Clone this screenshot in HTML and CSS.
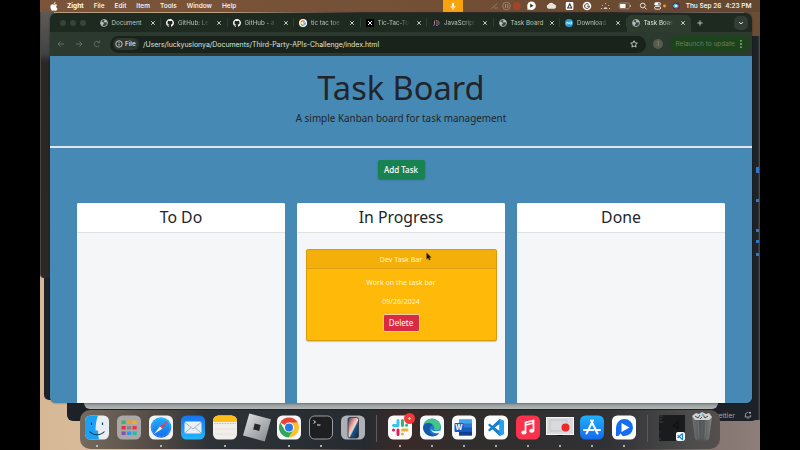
FILE: index.html
```html
<!DOCTYPE html>
<html lang="en">
<head>
<meta charset="utf-8">
<title>Task Board</title>
<link rel="stylesheet" href="styles.css">
</head>
<body>
<svg width="0" height="0" class="defs" aria-hidden="true">
  <defs>
    <symbol id="globe" viewBox="0 0 16 16"><circle cx="8" cy="8" r="7" fill="#39443d" stroke="#b9c1bd" stroke-width="1.6"/><path d="M2 5l4 1 2 3-2 2-1 3C2 12 1 9 2 5zM8 1l1 3-2 2 3 1 3-1 1 3 1-1C15 4 12 1 8 1z" fill="#b9c1bd"/></symbol>
    <symbol id="github" viewBox="0 0 16 16"><path fill="#fff" d="M8 0C3.58 0 0 3.58 0 8c0 3.54 2.29 6.53 5.47 7.59.4.07.55-.17.55-.38 0-.19-.01-.82-.01-1.49-2.01.37-2.53-.49-2.69-.94-.09-.23-.48-.94-.82-1.13-.28-.15-.68-.52-.01-.53.63-.01 1.08.58 1.23.82.72 1.21 1.87.87 2.33.66.07-.52.28-.87.51-1.07-1.78-.2-3.64-.89-3.64-3.95 0-.87.31-1.59.82-2.15-.08-.2-.36-1.02.08-2.12 0 0 .67-.21 2.2.82a7.42 7.42 0 0 1 4 0c1.53-1.04 2.2-.82 2.2-.82.44 1.1.16 1.92.08 2.12.51.56.82 1.27.82 2.15 0 3.07-1.87 3.75-3.65 3.95.29.25.54.73.54 1.48 0 1.07-.01 1.93-.01 2.2 0 .21.15.46.55.38A8.01 8.01 0 0 0 16 8c0-4.42-3.58-8-8-8z"/></symbol>
    <symbol id="close" viewBox="0 0 6 6"><path d="M1.2 1.2l3.6 3.6M4.8 1.2L1.2 4.8" stroke="#d5dcd7" stroke-width=".9"/></symbol>
    <linearGradient id="blue" x2="0" y2="1"><stop stop-color="#1fb1fb"/><stop offset="1" stop-color="#1669ec"/></linearGradient>
    <linearGradient id="mail" x2="0" y2="1"><stop stop-color="#1673ee"/><stop offset="1" stop-color="#22b6fb"/></linearGradient>
    <linearGradient id="silver" x2="1" y2="1"><stop stop-color="#e4e6e8"/><stop offset="1" stop-color="#818589"/></linearGradient>
    <linearGradient id="phone" x2="1" y2="1"><stop stop-color="#173c6d"/><stop offset=".35" stop-color="#ef9b91"/><stop offset=".52" stop-color="#e5ddd9"/><stop offset=".6" stop-color="#16558c"/><stop offset="1" stop-color="#0c2544"/></linearGradient>
    <linearGradient id="bin" x2="1"><stop stop-color="#777a7a"/><stop offset=".5" stop-color="#4c5050"/><stop offset="1" stop-color="#8b8e8e"/></linearGradient>
  </defs>
</svg>
<main class="desktop">
  <div class="back-window back-left"></div>
  <div class="back-window back-left-low"></div>
  <div class="back-window back-right"></div>
  <div class="back-window editor"><span>Prettier</span>
    <svg width="8" height="8" viewBox="0 0 8 8"><path d="M1.4 6V4a2.6 2.6 0 0 1 3-2.6M6.6 4v2H.8M3.2 7.2h1.6" fill="none" stroke="#b0b2b5" stroke-width=".8"/><circle cx="6" cy="1.8" r="1" fill="#b0b2b5"/></svg></div>
  <div class="back-window light"></div>
  <i class="mark m1"></i><i class="mark m2"></i><i class="mark m3"></i><i class="mark m4"></i><i class="mark m5"></i>

  <header class="menubar">
    <svg class="apple" width="8" height="9" viewBox="0 0 16 18"><path fill="#fff" d="M11 0c.2 2-1.500 4-3.400 4C7.400 2 9.200.2 11 0zM14.300 6.200C13 7 12.500 8 12.500 9.300c0 1.700 1 2.900 2.500 3.500-.8 2.400-2.400 4.700-4 4.700-1.100 0-1.500-.7-2.900-.7s-1.900.7-2.900.7C3 17.500.8 13.500.8 9.900.8 6.500 2.900 4.700 5 4.700c1.300 0 2.300.8 3.200.8.800 0 2-.9 3.500-.9 1 0 2 .5 2.600 1.600z"/></svg>
    <b>Zight</b><span>File</span><span>Edit</span><span>Item</span><span>Tools</span><span>Window</span><span>Help</span>
    <div class="mic"><svg width="6" height="9" viewBox="0 0 6 9"><rect x="1.900" y=".7" width="2.200" height="4.300" rx="1.100" fill="#fff"/><path d="M.9 4a2.100 2.100 0 0 0 4.200 0M3 6.200V8" fill="none" stroke="#fff" stroke-width=".8"/></svg></div>
    <svg class="status" width="192" height="12" viewBox="490 0 192 12">
      <path d="M491.500 8.500l6-5.200M494 8h4" stroke="#907b69" fill="none"/>
      <circle cx="506.500" cy="6" r="3.800" stroke="#a28e7d" fill="none" stroke-width=".8"/><path d="M505.500 4v4M507.700 4v4" stroke="#a28e7d"/>
      <circle cx="516.700" cy="6" r="3.900" fill="#a2442c"/>
      <circle cx="531.500" cy="5.800" r="4.300" fill="#fff"/><path d="M527.500 7v3l3-1" fill="#fff"/><path d="M530.200 3.600v4.200l3.400-2.100z" fill="#4c3a2b"/>
      <path d="M548.500 8.800a2.200 2.200 0 0 1-.2-4.200 3.200 3.200 0 0 1 5.700-.3 2.300 2.300 0 0 1 .5 4.500z" fill="#e9e3dd"/>
      <rect x="565.800" y="2" width="7.600" height="8" rx="1" fill="#fff"/><path d="M567.700 8l2-4.200 2 4.200z" fill="none" stroke="#43352a" stroke-width="1.100"/>
      <circle cx="587" cy="6" r="4.300" fill="#f8f5f2"/><path d="M588.700 4.400a2.400 2.400 0 1 0 .7 1.800H587" fill="none" stroke="#4c3a2b"/>
      <path d="M601 8.500h1M602 5l.8.700M605.500 3.200v1M609 5l-.8.700M609 8.500h1M604 8.500a1.600 1.600 0 0 1 3 0z" stroke="#e4d9ce" fill="none" stroke-width=".9"/>
      <rect x="619.300" y="3" width="10" height="5.800" rx="1.500" stroke="#a99687" fill="none" stroke-width=".8"/><rect x="620.100" y="3.900" width="5.500" height="4" rx=".6" fill="#fff"/><path d="M630.400 5v2" stroke="#b8a799"/>
      <circle cx="642.800" cy="5.500" r="2.400" stroke="#eee5dd" fill="none"/><path d="M644.600 7.400l2 2" stroke="#eee5dd"/>
      <rect x="654.300" y="2.300" width="6.500" height="3.200" rx="1.600" fill="#fff"/><circle cx="659" cy="3.900" r=".9" fill="#654831"/><rect x="654.600" y="6.500" width="6" height="2.700" rx="1.300" fill="none" stroke="#fff" stroke-width=".8"/><circle cx="664.500" cy="6" r="1.400" fill="#ff9b22"/>
      <circle cx="676.200" cy="6" r="3.500" fill="#413554"/><path d="M673 6c2-4 4-2 6 0-2 1-4 4-6 0z" fill="#52cbe8"/><path d="M674 7.500c2 2 4 1 5-1z" fill="#d15276"/><circle cx="676" cy="6" r="1.200" fill="#fff"/>
    </svg>
    <span class="date">Thu Sep 26</span><span class="time">4:23 PM</span>
  </header>

  <section class="browser">
    <div class="tabs">
      <div class="lights"><i></i><i></i><i></i></div>
      <div class="tab"><svg><use href="#globe"/></svg><span>Document</span><svg class="x"><use href="#close"/></svg></div>
      <div class="tab"><svg><use href="#github"/></svg><span class="fade">GitHub: Le</span><svg class="x"><use href="#close"/></svg></div>
      <div class="tab"><svg><use href="#github"/></svg><span class="fade">GitHub - a</span><svg class="x"><use href="#close"/></svg></div>
      <div class="tab"><svg viewBox="0 0 16 16"><circle cx="8" cy="8" r="8" fill="#fff"/><g fill="none" stroke-width="2.300"><path d="M4.200 5.500A4.500 4.500 0 0 1 11.300 5" stroke="#ea4335"/><path d="M4.200 5.500a4.500 4.500 0 0 0 0 5" stroke="#fbbc05"/><path d="M4.200 10.500a4.500 4.500 0 0 0 7 .8" stroke="#34a853"/><path d="M11.200 11.300A4.500 4.500 0 0 0 12.500 8H8" stroke="#4285f4"/></g></svg><span class="fade">tic tac toe</span><svg class="x"><use href="#close"/></svg></div>
      <div class="tab"><svg viewBox="0 0 16 16"><rect width="16" height="16" rx="2" fill="#000"/><path d="M4 4l8 8M12 4l-8 8" stroke="#fff" stroke-width="2"/></svg><span class="fade">Tic-Tac-To</span><svg class="x"><use href="#close"/></svg></div>
      <div class="tab"><svg viewBox="0 0 16 16"><rect width="16" height="16" fill="#17233d"/><path d="M5 3v8c0 2-2 2-3 1" fill="none" stroke="#d1844d" stroke-width="1.800"/><path d="M8 2c3 1 3 11 0 12M11 3c4 1 4 9 0 10" fill="none" stroke="#9c806f" stroke-width="1.800"/></svg><span class="fade">JavaScript</span><svg class="x"><use href="#close"/></svg></div>
      <div class="tab"><svg><use href="#globe"/></svg><span>Task Board</span><svg class="x"><use href="#close"/></svg></div>
      <div class="tab"><svg viewBox="0 0 16 16"><circle cx="8" cy="8" r="8" fill="#2a9bd7"/><path d="M4 11V6l4 4V6M10 5v4c0 2 3 2 3 0V5" fill="none" stroke="#e6faff" stroke-width="1.600"/></svg><span class="fade">Download</span><svg class="x"><use href="#close"/></svg></div>
      <div class="tab active"><svg><use href="#globe"/></svg><span class="fade">Task Board</span><svg class="x"><use href="#close"/></svg></div>
      <svg class="plus" width="6" height="6" viewBox="0 0 6 6"><path d="M3 .3v5.400M.3 3h5.400" stroke="#c1cac3" stroke-width=".9"/></svg>
      <div class="chevron"><svg width="6" height="4" viewBox="0 0 6 4"><path d="M1 1l2 2 2-2" fill="none" stroke="#dce3dd"/></svg></div>
    </div>
    <div class="toolbar">
      <svg class="nav" width="46" height="10" viewBox="0 0 46 10"><g fill="none" stroke="#667269" stroke-width=".9"><path d="M8 5H2M4.700 2.300L2 5l2.700 2.700M20 5h6M23.300 2.300L26 5l-2.700 2.700M43.300 6.300a2.700 2.700 0 1 1-.5-3.200"/><path d="M43.700 1.500v2.200h-2.200"/></g></svg>
      <div class="address">
        <div class="file"><svg width="8" height="8" viewBox="0 0 8 8"><circle cx="4" cy="4" r="3.200" fill="none" stroke="#e5ebe7" stroke-width=".8"/><path d="M4 3.500v2.200M4 2v.8" stroke="#e5ebe7" stroke-width=".8"/></svg><span>File</span></div>
        <span class="url">/Users/luckyusionya/Documents/Third-Party-APIs-Challenge/index.html</span>
        <svg class="star" width="8" height="8" viewBox="0 0 16 16"><path d="M8 1.500l2 4.300 4.700.5-3.500 3.200 1 4.700L8 11.800l-4.200 2.400 1-4.700L1.300 6.300 6 5.800z" fill="none" stroke="#d5ddd7" stroke-width="1.700"/></svg>
      </div>
      <div class="profile">I</div>
      <div class="relaunch"><span>Relaunch to update</span><svg width="2" height="8" viewBox="0 0 2 8"><path d="M.3 .2h1.400v1.400H.3zM.3 3.300h1.400v1.400H.3zM.3 6.400h1.400v1.400H.3z" fill="#b7d9b3"/></svg></div>
    </div>
    <div class="page">
      <div class="hero"><h1>Task Board</h1><p>A simple Kanban board for task management</p></div>
      <div class="actions"><button class="add">Add Task</button></div>
      <div class="lanes">
        <section class="lane"><h2>To Do</h2></section>
        <section class="lane"><h2>In Progress</h2>
          <article class="task"><h3>Dev Task Bar</h3><div class="task-body"><p>Work on the task bar</p><p>09/26/2024</p><button class="delete">Delete</button></div></article>
        </section>
        <section class="lane"><h2>Done</h2></section>
      </div>
    </div>
  </section>
  <svg class="cursor" width="6" height="9" viewBox="0 0 6 9"><path d="M.6.8v6.400l1.500-1.300 1 2.300 1.200-.6-1-2.200h2z" fill="#111" stroke="#77601e" stroke-width=".4"/></svg>

  <nav class="dock">
    <div class="app on"><svg viewBox="0 0 24 24"><rect width="24" height="24" rx="5.500" fill="#e9eef5"/><path d="M13 0H5.500A5.500 5.500 0 0 0 0 5.500v13A5.500 5.500 0 0 0 5.500 24H14c-.8-3-1-6-1-9h-2.500C10.500 9 11.500 4 13 0z" fill="#1aa1f6"/><path d="M4.500 16c4 4.300 11 4.300 15 0" fill="none" stroke="#173653" stroke-width="1.100"/><path d="M6.500 7v2.500M17.500 7v2.500" stroke="#173653" stroke-width="1.200"/></svg></div>
    <div class="app"><svg viewBox="0 0 24 24"><rect width="24" height="24" rx="5.500" fill="#aaa8a7"/><path d="M4.500 5h4.200v3.500H4.500z" fill="#41b553"/><path d="M10 5h4.200v3.500H10z" fill="#f49c23"/><path d="M15.500 5h4.200v3.500h-4.200z" fill="#f1ae22"/><path d="M4.500 10.500h4.200V14H4.500z" fill="#e43244"/><path d="M10 10.500h4.200V14H10z" fill="#838487"/><path d="M15.500 10.500h4.200V14h-4.200z" fill="#e9324b"/><path d="M4.500 16h4.200v3.500H4.500z" fill="#8a4fb0"/><path d="M10 16h4.200v3.500H10z" fill="#2798e8"/><path d="M15.500 16h4.200v3.500h-4.200z" fill="#34b5a6"/></svg></div>
    <div class="app on"><svg viewBox="0 0 24 24"><rect width="24" height="24" rx="5.500" fill="#f1f3f5"/><circle cx="12" cy="12" r="10.300" fill="url(#blue)"/><circle cx="12" cy="12" r="9" stroke="#84c9f8" stroke-width="1" stroke-dasharray=".4 1" fill="none"/><path d="M19 5.500l-5.800 7.800-2.300-2.400z" fill="#ef3f3a"/><path d="M5 18.500l5.900-7.600 2.300 2.400z" fill="#f5f5f5"/></svg></div>
    <div class="app"><svg viewBox="0 0 24 24"><rect width="24" height="24" rx="5.500" fill="url(#mail)"/><rect x="3.500" y="6" width="17" height="12" rx="1.500" fill="#e9eff3"/><path d="M4 7l8 6.500L20 7M4 17.500l6-5.500M20 17.500L14 12" fill="none" stroke="#9ba9b5" stroke-width=".9"/></svg></div>
    <div class="app on"><svg viewBox="0 0 24 24"><rect width="24" height="24" rx="5.500" fill="#f2efeb"/><path d="M0 6.500V5.500A5.500 5.500 0 0 1 5.500 0h13A5.500 5.500 0 0 1 24 5.500v1z" fill="#ffbd16"/><path d="M1 8h22" stroke="#a8a39c" stroke-width=".8" stroke-dasharray=".8 .8"/><path d="M2 13.500h20M2 18.500h20" stroke="#d5d0ca" stroke-width=".5"/></svg></div>
    <div class="app"><svg class="roblox" viewBox="0 0 28 28"><path d="M6.300 0L28 5.800 21.800 28 0 22z" fill="url(#silver)"/><path d="M11.700 10l6 1.500-1.500 6-6-1.600z" fill="#272929"/></svg></div>
    <div class="app on"><svg viewBox="0 0 24 24"><rect width="24" height="24" rx="5.500" fill="#f8f8f8"/><path d="M12 12L3.300 7A10 10 0 0 1 20.700 7z" fill="#df4637"/><path d="M12 12h9.300A10 10 0 0 0 20.700 7H12zM12 12l4.300 2.500L11.500 22A10 10 0 0 0 21.500 9z" fill="#fbc329"/><path d="M12 12l-4.300 2.500L3.300 7A10 10 0 0 0 11.500 22l4.800-7.500z" fill="#32a657"/><circle cx="12" cy="12" r="5" fill="#fff"/><circle cx="12" cy="12" r="4" fill="#2877ec"/></svg></div>
    <div class="app on"><svg viewBox="0 0 24 24"><rect x=".5" y=".5" width="23" height="23" rx="5" fill="#1d1f20" stroke="#9c9d9e"/><path d="M4.500 5l2 1.500-2 1.500M8 9.500h3.500" fill="none" stroke="#e4e4e4" stroke-width="1"/></svg></div>
    <div class="app"><svg viewBox="0 0 24 24"><rect width="24" height="24" rx="5.500" fill="#adb1b5"/><rect x="7" y="2" width="10.500" height="20.500" rx="2" fill="url(#phone)" stroke="#2c3039" stroke-width=".8"/></svg></div>
    <i class="divider"></i>
    <div class="app on"><svg viewBox="0 0 24 24"><rect width="24" height="24" rx="5.500" fill="#fafafa"/><g fill="none" stroke-width="3" stroke-linecap="round"><path d="M10 5v5M5.500 10H10" stroke="#36c5f0"/><path d="M14.500 5v5M18.500 9.800h.1" stroke="#2eb67d"/><path d="M14.500 14.500h4.500M14.500 18.500v.1" stroke="#ecb22e"/><path d="M10 14.500V19M5.500 14.500h.1" stroke="#e01e5a"/></g></svg><b class="badge"></b></div>
    <div class="app on"><svg viewBox="0 0 24 24"><rect width="24" height="24" rx="5.500" fill="#f9fbfc"/><circle cx="12" cy="12" r="9" fill="#1685ce"/><path d="M4 8c3-7 14-6 16.500 1.500 1 5-4 6-6.500 5 2-4-2-8-10-6.500z" fill="#44c38b"/><path d="M3 12c1-5 8-6 10-2-3 0-4 3-3 6s5 4 9 2c-4 5-15 3-16-6z" fill="#175ba4"/><path d="M11 12c-.5 3 4 5 8.500 3l1 1.500c-5 3-10 0-9.500-4.500z" fill="#f9fbfc"/></svg></div>
    <div class="app on"><svg viewBox="0 0 24 24"><rect width="24" height="24" rx="5.500" fill="#f7f9fc"/><rect x="7" y="4" width="13" height="16" rx="1" fill="#2b7cd3"/><path d="M7 4h13v4H7z" fill="#41a5ee"/><path d="M7 12h13v4H7z" fill="#185abd"/><path d="M7 16h13v4H7z" fill="#103f91"/><rect x="2.500" y="7.500" width="9" height="9" rx="1" fill="#185abd"/><text x="7" y="14.400" text-anchor="middle" fill="#fff" font-size="7" font-weight="bold" font-family="Inter, sans-serif">W</text></svg></div>
    <div class="app on"><svg viewBox="0 0 24 24"><rect width="24" height="24" rx="5.500" fill="#fff"/><path d="M15.500 3.500L20 5.500v13l-4.500 2L4 9.500 5.500 8l10 7.500v-7l-10 7.500L4 14.500z" fill="#1681ca"/><path d="M15.500 3.500L20 5.500v13l-4.500 2z" fill="#25a1ed"/></svg></div>
    <div class="app on"><svg viewBox="0 0 24 24"><rect width="24" height="24" rx="5.500" fill="#fa334c"/><path d="M9.500 17V7l8-2v10M9.500 9.500l8-2" fill="none" stroke="#fff" stroke-width="1.700"/><ellipse cx="7.800" cy="17" rx="2.600" ry="2" fill="#fff"/><ellipse cx="15.800" cy="15.200" rx="2.600" ry="2" fill="#fff"/></svg></div>
    <div class="app on"><svg class="recorder" viewBox="0 0 28 24"><rect x=".5" y="2.500" width="27" height="17" fill="#d9dadd" stroke="#f4f4f4"/><path d="M4 5h17v11H4z" fill="none" stroke="#b3b6ba" stroke-width=".6"/><circle cx="19.500" cy="12.500" r="4" fill="#ef2828"/><path d="M11 20h6v1h-6z" fill="#111"/></svg></div>
    <div class="app on"><svg viewBox="0 0 24 24"><rect width="24" height="24" rx="5.500" fill="url(#blue)"/><path d="M11 5l6.500 13M13 5L6.500 18M4 14.500h9.500M16.500 14.500H20" stroke="#fff" stroke-width="2" stroke-linecap="round"/></svg></div>
    <div class="app on"><svg viewBox="0 0 24 24"><rect width="24" height="24" rx="5.500" fill="#fff"/><path d="M4 20.500V12a8.500 8.500 0 1 1 8.500 8.500z" fill="#176df1"/><path d="M6 21l2.500-3 2.500 3z" fill="#fff"/><path d="M9.500 7.500v9l8-4.500z" fill="#fff"/></svg></div>
    <i class="divider"></i>
    <div class="app code"><svg viewBox="0 0 28 26"><path d="M2 0h26v26H2z" fill="#1a1b1c"/><path d="M2 1h4M2 4h3M2 7h4M1 17h2M1 24h3" stroke="#3b4147"/><path d="M21 6v8l-5-4.500M21 6l-5 5.500" fill="none" stroke="#101112" stroke-width="1.200"/><rect x="19" y="17" width="9" height="9" rx="2" fill="#f8fbfe"/><path d="M25.500 18.500v6l-5-4.300M25.500 18.500L20.500 23" fill="none" stroke="#1685d1" stroke-width="1.200"/></svg></div>
    <div class="app trash"><svg viewBox="0 0 22 29"><path d="M1 5l3 22c2 2 12 2 14 0l3-22z" fill="url(#bin)" opacity=".85"/><path d="M1 4l4-3 3 1 3-2 4 2 3-1 3 4-3 3H4z" fill="#d2d3d2"/><path d="M4 4l3 2 2-3M12 3l2 3 3-2M9 7l2-2" stroke="#39474e" fill="none"/><path d="M11 2l2 2" stroke="#4fadd0" stroke-width="1.500"/><path d="M7 9l1 17M11 9v18M15 9l-1 17" stroke="#a0a3a3" stroke-width=".3"/></svg></div>
  </nav>
</main>
</body>
</html>
```
FILE: styles.css
```css
* { box-sizing: border-box; }
body { margin: 0; background: #000; font-family: Inter, sans-serif; overflow: hidden; }
h1, h2, h3, p { margin: 0; font-weight: 400; }
.defs { position: absolute; }
.desktop { position: relative; width: 720px; height: 450px; margin-left: 40px; overflow: hidden;
  background: linear-gradient(90deg, #d6b896, #ddc2a2 25%, #3c302e 45%, #3b3332 80%, #867571 93%, #8d7e79); }

.back-window { position: absolute; background: #1c2227; }
.back-left { left: 0; top: 12px; width: 14px; height: 266px; background: linear-gradient(#605a55, #3f4345 42px, #292626 50px, #2b2928); border-left: 1px solid #4b4542; border-radius: 0 0 0 4px; }
.back-left-low { left: 4px; top: 278px; width: 14px; height: 122px; border-radius: 0 0 0 5px; }
.back-right { right: 0; top: 12px; width: 16px; height: 408px; background: linear-gradient(90deg, #1c2227 85%, #505252); border-top: 24px solid #6b4d34; }
.editor { left: 27px; top: 385px; width: 691px; height: 36px; border-radius: 0 0 6px 6px; display: flex; align-items: flex-end; justify-content: flex-end; gap: 9px; padding: 0 6px 1px 0; color: #a1a4a7; font-size: 6.800px; line-height: 9px; }
.editor svg { margin-bottom: 1px; }
.light { left: 44px; top: 390px; width: 634px; height: 19px; background: linear-gradient(#8d9294 70%, #b4b8b8); border-radius: 0 0 6px 6px; }
.mark { position: absolute; left: 716px; width: 3px; height: 3px; background: #3276c4; }
.m1 { top: 167px; height: 6px; } .m2 { top: 199px; } .m3 { top: 229px; } .m4 { top: 240px; } .m5 { top: 253px; }

.menubar { position: relative; display: flex; align-items: center; height: 12px; padding-left: 10px; color: #fff; font-size: 6.500px; font-weight: 500; line-height: 12px; background: linear-gradient(90deg, #7b5539, #755137 45%, #65462f); white-space: nowrap; }
.apple { margin-right: 9px; }
.menubar > b, .menubar > span { margin-right: 10px; }
.mic { width: 20px; height: 12px; margin-left: 197px; background: #f9a30c; display: flex; align-items: center; justify-content: center; }
.status { margin-left: 27px; flex: none; }
.menubar .date { margin: 0 4px 0 auto; }
.menubar .time { margin-right: 8.500px; }
.menubar .date, .menubar .time { font-size: 6.600px; letter-spacing: -.05px; }

.browser { position: absolute; left: 10px; top: 13px; width: 702px; height: 390px; border-radius: 6px; overflow: hidden; background: #4789b5; box-shadow: 0 0 2px #0008; display: flex; flex-direction: column; }
.tabs { height: 19px; flex: none; background: #1e2920; display: flex; align-items: center; position: relative; }
.lights { width: 44.500px; padding-left: 10px; display: flex; gap: 4px; flex: none; }
.lights i { width: 6px; height: 6px; border-radius: 50%; background: #354638; }
.tab { width: 66.500px; height: 17px; padding: 0 5px; display: flex; align-items: center; gap: 4px; flex: none; color: #bcc5be; font-size: 6.200px; position: relative; }
.tab svg { width: 8px; height: 8px; flex: none; }
.tab span { width: 34px; white-space: nowrap; line-height: 10px; }
.tab .x { width: 6px; height: 6px; }
.tab::after { content: ""; position: absolute; right: 0; height: 9px; border-right: 1px solid #303d33; }
.fade { mask-image: linear-gradient(90deg, #000 60%, transparent 93%); }
.active { background: #2e3c30; border-radius: 5px 5px 0 0; align-self: flex-end; width: 64px; padding-bottom: 2px; color: #e2e7e3; }
.active::after { display: none; }
.plus { margin-left: 6px; }
.chevron { width: 14px; height: 14px; margin: 0 4px 0 auto; border-radius: 5px; background: #333d35; display: flex; align-items: center; justify-content: center; }
.toolbar { height: 24px; flex: none; background: #2c392e; display: flex; align-items: center; padding-left: 6px; }
.nav { flex: none; }
.address { width: 536px; height: 17px; margin-left: 8px; border-radius: 9px; background: #19231b; display: flex; align-items: center; padding: 0 8px 0 3px; flex: none; }
.file { width: 26px; height: 12px; border-radius: 6px; background: #2d382f; display: flex; align-items: center; gap: 2px; padding-left: 2px; font-size: 6.300px; color: #e5ebe7; font-weight: 500; }
.url { color: #dce3dd; font-size: 6.930px; margin-left: 4px; white-space: nowrap; }
.star { margin-left: auto; }
.profile { width: 10px; height: 10px; margin-left: 7px; border-radius: 50%; background: #555b4d; color: #85b756; font-size: 6px; line-height: 10px; text-align: center; }
.relaunch { width: 80px; height: 16px; margin-left: 7px; border-radius: 8px; background: #1c431c; color: #697d67; font-size: 6.500px; display: flex; align-items: center; justify-content: space-between; padding: 0 8px 0 5.500px; white-space: nowrap; }

.page { flex: 1; background: #4789b5; font-family: "Noto Sans", sans-serif; color: #212529; text-align: center; display: flex; flex-direction: column; min-height: 0; }
.hero { height: 92px; flex: none; padding-top: 11px; border-bottom: 2px solid #e1e4e9; }
.hero h1 { font-size: 32.600px; line-height: 41px; }
.hero p { margin-top: 2px; font-size: 9.900px; line-height: 16px; }
.actions { height: 55px; flex: none; padding-top: 12px; }
button { border: 0; font: inherit; color: #fff; display: block; margin: 0 auto; padding: 0; }
.add { width: 47px; height: 19px; border-radius: 2px; background: #198251; font-size: 8px; font-weight: 500; box-shadow: 0 1px 2px #0004; }
.lanes { flex: 1; display: grid; grid-template-columns: repeat(3, 208px); gap: 12px; padding-left: 27px; min-height: 0; }
.lane { background: #f5f6f8; border-radius: 2px 2px 0 0; }
.lane h2 { height: 30px; border-bottom: 1px solid #dfe1e3; border-radius: 2px 2px 0 0; background: #fff; font-size: 15.800px; line-height: 28px; }
.task { width: 191px; height: 92px; margin: 16px 0 0 8.500px; border: 1px solid #d79c0d; border-radius: 2px; background: #ffb908; color: #fff4cf; font-size: 7.100px; box-shadow: 0 1px 1px #0003; }
.task h3 { height: 19px; font-size: inherit; line-height: 18px; background: #f5af0b; border-bottom: 1px solid #dca010; }
.task-body { padding-top: 8px; line-height: 10px; }
.task-body p { margin-bottom: 8.500px; }
.delete { width: 37px; height: 18px; background: #d92b43; border: 1px solid #f2cba0; border-radius: 2px; font-size: 8px; line-height: 10px; }
.cursor { position: absolute; left: 386px; top: 252px; }

.dock { position: absolute; left: 40px; top: 410px; width: 640px; height: 39px; border-radius: 10px; padding: 5px 0 0 1px; display: flex; background: linear-gradient(90deg, #766a5d, #514a44 12%, #2e3338 20%, #252b30 44%, #3a2929 50%, #302e2c 60%, #303135 82%, #4c4b4b 95%, #554f4e); }
.app { position: relative; width: 32px; height: 34px; flex: none; display: flex; justify-content: center; align-items: flex-start; }
.app svg { width: 24px; height: 25px; flex: none; }
.app .roblox { width: 28px; height: 29px; margin-top: -2px; }
.app .recorder { width: 28px; height: 24px; }
.on::after { content: ""; position: absolute; bottom: 2px; left: 15px; width: 2px; height: 2px; border-radius: 50%; background: #d7d7d7; }
.divider { width: 15px; height: 27px; flex: none; background: linear-gradient(#5d5b58, #5d5b58) center / 1px 100% no-repeat; }
.badge { position: absolute; right: 1px; top: -2px; width: 11px; height: 11px; border-radius: 50%; background: radial-gradient(circle, #ffb0a8 1px, #ee3d38 1.500px); }
.app.code svg { width: 28px; height: 26px; }
.app.trash { width: 28px; margin-left: 1px; }
.app.trash svg { width: 22px; height: 29px; margin-top: -3px; }
```
